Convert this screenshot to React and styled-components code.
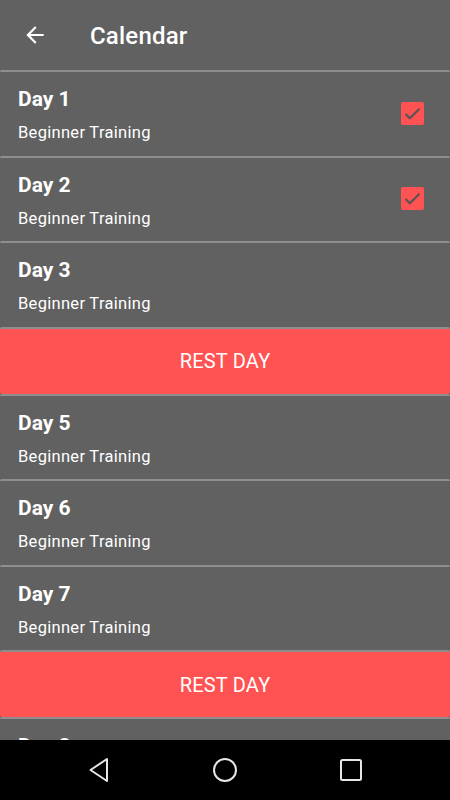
import React from "react";
import styled, { createGlobalStyle } from "styled-components";

const GlobalStyle = createGlobalStyle`
  html, body {
    margin: 0;
    padding: 0;
    background: #616161;
    font-family: Roboto, "Noto Sans", sans-serif;
  }
`;

const Screen = styled.div`
  width: 450px;
  height: 800px;
  display: flex;
  flex-direction: column;
  background: #616161;
  overflow: hidden;
`;

const AppBar = styled.div`
  height: 70px;
  flex: none;
  display: flex;
  align-items: center;
  padding-left: 22px;
  color: #fff;
`;

const BackButton = styled.div`
  width: 26px;
  height: 26px;
  display: flex;
  align-items: center;
  justify-content: center;
`;

const Title = styled.h1`
  margin: 2px 0 0 42px;
  font-size: 24px;
  font-weight: 500;
  letter-spacing: 0.2px;
`;

const List = styled.div`
  flex: 1;
  overflow: hidden;
  display: flex;
  flex-direction: column;
`;

const Card = styled.div`
  flex: none;
  height: 83.5px;
  border-top: 2px solid #8e8e8e;
  border-radius: 2px;
  display: flex;
  align-items: center;
  justify-content: space-between;
  padding: 0 26px 0 18px;
  background: #616161;
  color: #fff;
`;

const Texts = styled.div`
  display: flex;
  flex-direction: column;
  padding-top: 4px;
`;

const DayName = styled.div`
  font-size: 21px;
  font-weight: 700;
  line-height: 24px;
  margin-top: -1px;
`;

const Subtitle = styled.div`
  font-size: 16.5px;
  line-height: 20px;
  margin-top: 12px;
  letter-spacing: 0.3px;
`;

const Check = styled.div`
  width: 23px;
  height: 23px;
  border-radius: 2px;
  background: #ff5252;
  display: flex;
  align-items: center;
  justify-content: center;
  margin-top: -1px;
`;

const RestDay = styled.div`
  flex: none;
  height: 65px;
  border-top: 2px solid #8e8e8e;
  border-radius: 2px;
  background: #ff5252;
  color: #fff;
  display: flex;
  align-items: center;
  justify-content: center;
  font-size: 20px;
  letter-spacing: 0.2px;
`;

const NavBar = styled.div`
  height: 60px;
  flex: none;
  background: #000;
  display: flex;
  align-items: center;
  gap: 100px;
  padding-left: 86px;
`;

const NavIcon = styled.div`
  width: 26px;
  height: 26px;
  display: flex;
  align-items: center;
  justify-content: center;
`;

const days = [
  { type: "day", n: 1, done: true },
  { type: "day", n: 2, done: true },
  { type: "day", n: 3 },
  { type: "rest" },
  { type: "day", n: 5 },
  { type: "day", n: 6 },
  { type: "day", n: 7 },
  { type: "rest" },
  { type: "day", n: 8 },
];

export default function App() {
  return (
    <Screen>
      <GlobalStyle />
      <AppBar>
        <BackButton>
          <svg width="26" height="26" viewBox="0 0 24 24">
            <path d="M20 11H7.83l5.59-5.59L12 4l-8 8 8 8 1.41-1.41L7.83 13H20v-2z" fill="#fff" />
          </svg>
        </BackButton>
        <Title>Calendar</Title>
      </AppBar>
      <List>
        {days.map((d, i) =>
          d.type === "rest" ? (
            <RestDay key={i}>REST DAY</RestDay>
          ) : (
            <Card key={i}>
              <Texts>
                <DayName>Day {d.n}</DayName>
                <Subtitle>Beginner Training</Subtitle>
              </Texts>
              {d.done && (
                <Check>
                  <svg width="21" height="21" viewBox="0 0 24 24">
                    <path d="M4 12.5l5 5 11-11" fill="none" stroke="#555" strokeWidth="2.4" />
                  </svg>
                </Check>
              )}
            </Card>
          )
        )}
      </List>
      <NavBar>
        <NavIcon>
          <svg width="26" height="26" viewBox="0 0 26 26">
            <path d="M21 2v22L4.5 13z" fill="none" stroke="#e6e6e6" strokeWidth="2" strokeLinejoin="round" />
          </svg>
        </NavIcon>
        <NavIcon>
          <svg width="26" height="26" viewBox="0 0 26 26">
            <circle cx="13" cy="13" r="11" fill="none" stroke="#e6e6e6" strokeWidth="2" />
          </svg>
        </NavIcon>
        <NavIcon>
          <svg width="26" height="26" viewBox="0 0 26 26">
            <rect x="3" y="3" width="20" height="20" rx="1.5" fill="none" stroke="#e6e6e6" strokeWidth="2" />
          </svg>
        </NavIcon>
      </NavBar>
    </Screen>
  );
}
